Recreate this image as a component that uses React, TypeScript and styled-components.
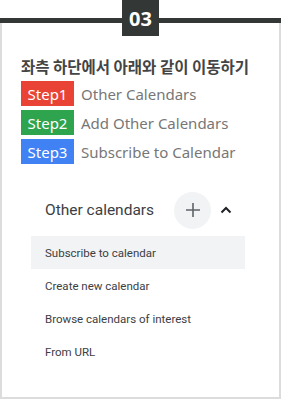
import styled, { createGlobalStyle } from "styled-components";

const Global = createGlobalStyle`
  html, body { margin: 0; padding: 0; background: #fff; }
  body { width: 281px; height: 399px; overflow: hidden; }
`;

const Page = styled.div`
  position: relative;
  width: 281px;
  height: 399px;
  display: flex;
  flex-direction: column;
`;

const Header = styled.div`
  height: 36px;
  display: flex;
  align-items: center;
  justify-content: center;
  position: relative;
  &::before {
    content: "";
    position: absolute;
    left: 0;
    right: 0;
    top: 18px;
    height: 5px;
    background: #333836;
  }
`;

const Badge = styled.div`
  position: relative;
  width: 37px;
  height: 36px;
  background: #333836;
  color: #fff;
  font-family: "Noto Sans", "Open Sans", sans-serif;
  font-weight: 700;
  font-size: 20px;
  display: flex;
  align-items: center;
  justify-content: center;
`;

const Frame = styled.div`
  flex: 1;
  margin-top: -13px;
  border: 2px solid #dcdcdc;
  border-top: none;
  padding: 33px 0 0 19px;
  box-sizing: border-box;
`;

const Title = styled.div`
  font-family: "Noto Sans CJK KR", "Noto Sans", sans-serif;
  font-weight: 700;
  font-size: 15.5px;
  color: #444;
  line-height: 20px;
  margin-bottom: 5px;
`;

const StepRow = styled.div`
  display: flex;
  align-items: center;
  gap: 7px;
  margin-bottom: 4px;
`;

const StepTag = styled.span<{ $color: string }>`
  width: 53px;
  height: 25px;
  background: ${p => p.$color};
  color: #fff;
  font-family: "Noto Sans", sans-serif;
  font-size: 15px;
  display: flex;
  align-items: center;
  justify-content: center;
`;

const StepText = styled.span`
  font-family: "Noto Sans", sans-serif;
  font-size: 15px;
  color: #777;
`;

const Panel = styled.div`
  margin: 27px 0 0 10px;
  width: 214px;
  font-family: Roboto, "Liberation Sans", sans-serif;
  color: #3c4043;
`;

const PanelHead = styled.div`
  height: 38px;
  display: flex;
  align-items: center;
  padding-left: 14px;
  margin-bottom: 7px;
`;

const HeadText = styled.span`
  font-size: 15.5px;
  font-weight: 400;
  width: 129px;
`;

const PlusBtn = styled.div`
  width: 37px;
  height: 37px;
  border-radius: 50%;
  background: #f1f3f4;
  display: flex;
  align-items: center;
  justify-content: center;
`;

const Chevron = styled.div`
  margin-left: 9px;
  display: flex;
  align-items: center;
`;

const MenuItem = styled.div<{ $active?: boolean }>`
  height: 33px;
  display: flex;
  align-items: center;
  padding-left: 14px;
  font-size: 11.5px;
  background: ${p => (p.$active ? "#f1f3f4" : "transparent")};
`;

const steps = [
  { tag: "Step1", color: "#e84335", text: "Other Calendars" },
  { tag: "Step2", color: "#2ea44f", text: "Add Other Calendars" },
  { tag: "Step3", color: "#4082f4", text: "Subscribe to Calendar" },
];

const items = [
  "Subscribe to calendar",
  "Create new calendar",
  "Browse calendars of interest",
  "From URL",
];

export default function App() {
  return (
    <Page>
      <Global />
      <Header>
        <Badge>03</Badge>
      </Header>
      <Frame>
        <Title>좌측 하단에서 아래와 같이 이동하기</Title>
        {steps.map(s => (
          <StepRow key={s.tag}>
            <StepTag $color={s.color}>{s.tag}</StepTag>
            <StepText>{s.text}</StepText>
          </StepRow>
        ))}
        <Panel>
          <PanelHead>
            <HeadText>Other calendars</HeadText>
            <PlusBtn>
              <svg width="14" height="14" viewBox="0 0 14 14">
                <path d="M7 0v14M0 7h14" stroke="#5f6368" strokeWidth="1.6" />
              </svg>
            </PlusBtn>
            <Chevron>
              <svg width="12" height="8" viewBox="0 0 12 8">
                <path d="M1.5 6.5L6 2l4.5 4.5" stroke="#202124" strokeWidth="2" fill="none" />
              </svg>
            </Chevron>
          </PanelHead>
          {items.map((t, i) => (
            <MenuItem key={t} $active={i === 0}>{t}</MenuItem>
          ))}
        </Panel>
      </Frame>
    </Page>
  );
}
